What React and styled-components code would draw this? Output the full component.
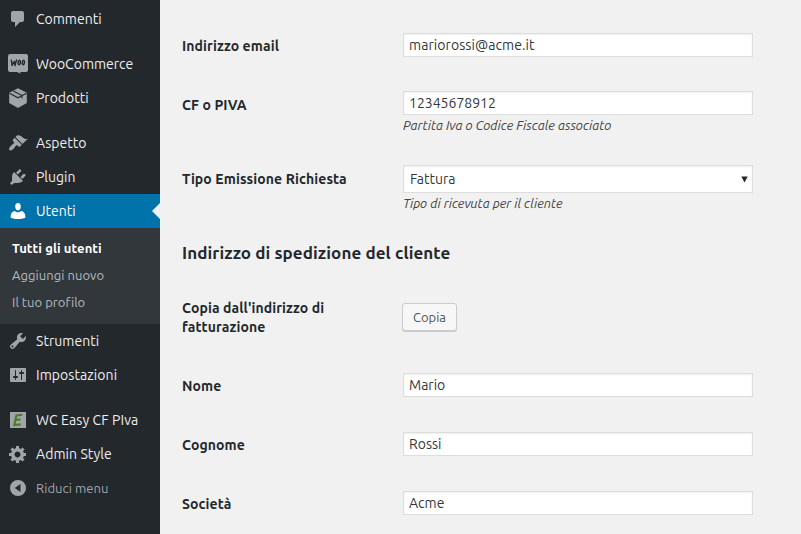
import React from 'react';
import styled, { createGlobalStyle, css } from 'styled-components';

const GlobalStyle = createGlobalStyle`
  *, *::before, *::after { box-sizing: border-box; }
  body {
    margin: 0;
    background: #f1f1f1;
    font-family: "Ubuntu", "Noto Sans", sans-serif;
    font-size: 13px;
    color: #444;
  }
`;

const Page = styled.div`
  display: flex;
  width: 801px;
  height: 534px;
  overflow: hidden;
`;

const Sidebar = styled.nav`
  flex: 0 0 160px;
  padding-top: 2px;
  background: #23282d;
`;

const MenuGroup = styled.div`
  & + & { margin-top: 11px; }
`;

const MenuItem = styled.a`
  position: relative;
  display: flex;
  align-items: center;
  gap: 8px;
  height: 34px;
  padding-left: 8px;
  color: #eee;
  font-size: 14px;
  line-height: 18px;
  white-space: nowrap;
  letter-spacing: ${(p) => p.$track || 0}px;

  svg { flex: none; fill: #a0a5aa; }

  ${(p) => p.$current && css`
    background: #0073aa;
    color: #fff;
    svg { fill: #fff; }
    &::after {
      content: "";
      position: absolute;
      right: 0;
      top: 9px;
      border: 8px solid transparent;
      border-left-width: 0;
      border-right-color: #f1f1f1;
    }
  `}

  ${(p) => p.$muted && css`
    color: #a0a5aa;
    font-size: 13px;
  `}
`;

const Submenu = styled.div`
  height: 96px;
  padding: 7px 0 8px 12px;
  background: #32373c;
`;

const SubmenuLink = styled.a`
  display: block;
  height: 27px;
  font-size: 13px;
  line-height: 27px;
  white-space: nowrap;
  color: ${(p) => (p.$current ? '#fff' : '#b4b9be')};
  font-weight: ${(p) => (p.$current ? 700 : 400)};
  letter-spacing: ${(p) => (p.$current ? 0.1 : 0.05)}px;
`;

const Content = styled.main`
  flex: 1;
  padding: 16px 48px 0 22px;
`;

const FieldRow = styled.div`
  display: grid;
  grid-template-columns: 221px 350px;
  height: ${(p) => p.$height}px;
  padding-top: 17px;
`;

const Label = styled.label`
  padding-top: ${(p) => p.$drop || 4}px;
  color: #23282d;
  font-size: 14px;
  font-weight: 700;
  line-height: 19px;
  letter-spacing: 0.1px;
`;

const LabelLine = styled.span`
  display: block;
`;

const control = css`
  display: block;
  width: 350px;
  margin: 0;
  border: 1px solid #ddd;
  border-radius: 0;
  outline: 0;
  background: #fff;
  box-shadow: inset 0 1px 2px rgba(0, 0, 0, 0.07);
  color: #32373c;
  font-family: inherit;
  font-size: 14px;
  letter-spacing: ${(p) => p.$track || 0}px;
`;

const TextInput = styled.input`
  ${control}
  height: 24px;
  padding: 0 5px 1px;
`;

const SelectWrap = styled.div`
  position: relative;
  height: 28px;

  svg {
    position: absolute;
    right: 5px;
    top: 11px;
    fill: #23282d;
  }
`;

const Select = styled.select`
  ${control}
  appearance: none;
  height: 28px;
  padding: 0 6px;
`;

const Hint = styled.div`
  font-size: 13px;
  font-style: italic;
  line-height: 20px;
  color: #444;
  white-space: nowrap;
`;

const SectionTitle = styled.h2`
  height: 57px;
  margin: 0;
  padding-top: 19px;
  color: #23282d;
  font-size: 17px;
  font-weight: 700;
  line-height: 24px;
  letter-spacing: 0.09px;
`;

const Button = styled.button`
  width: 55px;
  height: 28px;
  margin: 7px 0 0 -1px;
  padding: 0;
  border: 1px solid #ccc;
  border-radius: 3px;
  background: #f7f7f7;
  box-shadow: 0 1px 0 #ccc;
  color: #555;
  font-family: inherit;
  font-size: 13px;
  line-height: 26px;
`;

const PATHS = {
  comments: 'M5 2h9c1.1 0 2 .9 2 2v7c0 1.1-.9 2-2 2h-2l-5 5v-5H5c-1.1 0-2-.9-2-2V4c0-1.1.9-2 2-2z',
  users: 'M10 9.4c-2.100 0-2.800-2.100-2.800-3.900C7.200 3.400 8.200 2 10 2s2.800 1.400 2.800 3.500c0 1.800-.7 3.900-2.800 3.900zM6.900 9.900c.8.900 1.900 1.400 3.100 1.400s2.300-.5 3.100-1.400c2.600.3 4.200 2.500 4.200 4.900v2c-2.100.9-4.600 1.300-7.300 1.300s-5.200-.4-7.300-1.300v-2c0-2.400 1.600-4.600 4.200-4.900z',
  appearance: 'M14.48 11.06L7.41 3.99l1.5-1.5c.5-.56 2.3-.47 3.51.32 1.21.8 1.43 1.28 2.91 2.1 1.18.64 2.45 1.26 4.45.85zm-.71.71L6.7 4.7 4.93 6.47c-.39.39-.39 1.02 0 1.41l1.06 1.06c.39.39.39 1.03 0 1.42-.6.6-1.43 1.11-2.21 1.69-.35.26-.7.53-1.01.84C1.43 14.23.4 16.08 1.4 17.07c.99 1 2.84-.03 4.18-1.36.31-.31.58-.66.85-1.02.57-.78 1.08-1.61 1.69-2.21.39-.39 1.02-.39 1.41 0l1.06 1.06c.39.39 1.02.39 1.41 0z',
  plugins: 'M13.11 4.36L9.87 7.6 8 5.73l3.24-3.24c.35-.34 1.05-.2 1.56.32.52.51.66 1.21.31 1.55zm-8 1.77l.91-1.12 9.01 9.01-1.19.84c-.71.71-2.63 1.16-3.82 1.16H6.14L4.9 17.26c-.59.59-1.54.59-2.12 0-.59-.58-.59-1.53 0-2.12l1.24-1.24v-3.88c0-1.13.4-3.19 1.09-3.89zm7.26 3.97l3.24-3.24c.34-.35 1.04-.21 1.55.31.52.51.66 1.21.31 1.55l-3.24 3.25z',
  tools: 'M16.68 9.77c-1.34 1.34-3.3 1.67-4.95.99l-5.41 6.52c-.99.99-2.59.99-3.58 0s-.99-2.59 0-3.57l6.52-5.42c-.68-1.65-.35-3.61.99-4.95 1.28-1.28 3.12-1.62 4.72-1.06l-2.89 2.89 2.82 2.82 2.86-2.87c.53 1.58.18 3.39-1.08 4.65zM3.81 16.21c.4.39 1.04.39 1.43 0 .4-.4.4-1.04 0-1.43-.39-.4-1.03-.4-1.43 0-.39.39-.39 1.03 0 1.43z',
  settings: 'M18 16V4c0-.55-.45-1-1-1H3c-.55 0-1 .45-1 1v12c0 .55.45 1 1 1h14c.55 0 1-.45 1-1zM8 11h1c.55 0 1 .45 1 1s-.45 1-1 1H8v1.5c0 .28-.22.5-.5.5s-.5-.22-.5-.5V13H6c-.55 0-1-.45-1-1s.45-1 1-1h1V5.5c0-.28.22-.5.5-.5s.5.22.5.5V11zm5-2h-1c-.55 0-1-.45-1-1s.45-1 1-1h1V5.5c0-.28.22-.5.5-.5s.5.22.5.5V7h1c.55 0 1 .45 1 1s-.45 1-1 1h-1v5.5c0 .28-.22.5-.5.5s-.5-.22-.5-.5V9z',
  generic: 'M18 12h-2.18c-.17.7-.44 1.35-.81 1.93l1.54 1.54-2.1 2.1-1.54-1.54c-.58.36-1.23.63-1.91.79V19H8v-2.18c-.68-.16-1.33-.43-1.91-.79l-1.54 1.54-2.12-2.12 1.54-1.54c-.36-.58-.63-1.23-.79-1.91H1V9.03h2.17c.16-.7.44-1.35.8-1.94L2.43 5.55l2.1-2.1 1.54 1.54c.58-.37 1.24-.64 1.93-.81V2h3v2.18c.68.16 1.33.43 1.91.79l1.54-1.54 2.12 2.12-1.54 1.54c.36.59.64 1.24.8 1.94H18V12zm-8.5 1.5c1.66 0 3-1.34 3-3s-1.34-3-3-3-3 1.34-3 3 1.34 3 3 3z',
  collapse: 'M10 2a8 8 0 1 0 0 16a8 8 0 1 0 0-16zM12.500 6v8L6.800 10z',
};

const Icon = ({ name }) => (
  <svg width="20" height="20" viewBox="0 0 20 20" aria-hidden="true">
    <path fillRule="evenodd" d={PATHS[name]} />
  </svg>
);

const WooIcon = () => (
  <svg width="20" height="20" viewBox="0 0 20 20" aria-hidden="true">
    <path d="M2 0h16a2 2 0 0 1 2 2v14a2 2 0 0 1-2 2h-5.700l.2 1.800-3.400-1.800H2a2 2 0 0 1-2-2V2a2 2 0 0 1 2-2z" />
    <g fill="none" stroke="#23282d" strokeWidth="1.450" strokeLinecap="round" strokeLinejoin="round">
      <path d="M3.400 6.300l.7 5.200 2.100-4 1 4q.3-3.400 1.400-5.400" />
      <ellipse cx="11.200" cy="8.500" rx="1.100" ry="2.200" transform="rotate(12 11.200 8.500)" />
      <ellipse cx="15.300" cy="8.500" rx="1.100" ry="2.200" transform="rotate(12 15.300 8.500)" />
    </g>
  </svg>
);

const BoxIcon = () => (
  <svg width="20" height="20" viewBox="0 0 20 20" aria-hidden="true">
    <path d="M10 .2L18.800 4.800v10.300L10 20 1.200 15.100V4.800z" />
    <path d="M1.500 5.200L10 9.800l8.500-4.600M5.300 2.900l8.700 4.700v3" fill="none" stroke="#23282d" strokeWidth="1.100" />
  </svg>
);

const EasyIcon = () => (
  <svg width="20" height="20" viewBox="0 0 20 20" aria-hidden="true">
    <path d="M2 2h16v16H2z" />
    <path d="M14.300 4.800L8.300 5.400 6.300 15l6.400-.6M7.300 9.900l5.200-.4" fill="none" stroke="#4f7a28" strokeWidth="2.100" />
  </svg>
);

const shippingFields = [
  { label: 'Nome', value: 'Mario' },
  { label: 'Cognome', value: 'Rossi' },
  { label: 'Società', value: 'Acme' },
];

export default function App() {
  return (
    <>
      <GlobalStyle />
      <Page>
        <Sidebar>
          <MenuGroup>
            <MenuItem><Icon name="comments" />Commenti</MenuItem>
          </MenuGroup>
          <MenuGroup>
            <MenuItem><WooIcon />WooCommerce</MenuItem>
            <MenuItem><BoxIcon />Prodotti</MenuItem>
          </MenuGroup>
          <MenuGroup>
            <MenuItem><Icon name="appearance" />Aspetto</MenuItem>
            <MenuItem><Icon name="plugins" />Plugin</MenuItem>
            <MenuItem $current><Icon name="users" />Utenti</MenuItem>
            <Submenu>
              <SubmenuLink $current>Tutti gli utenti</SubmenuLink>
              <SubmenuLink>Aggiungi nuovo</SubmenuLink>
              <SubmenuLink>Il tuo profilo</SubmenuLink>
            </Submenu>
            <MenuItem $track={0.05}><Icon name="tools" />Strumenti</MenuItem>
            <MenuItem $track={0.08}><Icon name="settings" />Impostazioni</MenuItem>
          </MenuGroup>
          <MenuGroup>
            <MenuItem $track={0.1}><EasyIcon />WC Easy CF PIva</MenuItem>
            <MenuItem $track={0.08}><Icon name="generic" />Admin Style</MenuItem>
            <MenuItem $muted $track={0.08}><Icon name="collapse" />Riduci menu</MenuItem>
          </MenuGroup>
        </Sidebar>
        <Content>
          <FieldRow $height={58}>
            <Label>Indirizzo email</Label>
            <TextInput defaultValue="mariorossi@acme.it" $track={0.07} />
          </FieldRow>
          <FieldRow $height={74}>
            <Label $drop={5}>CF o PIVA</Label>
            <div>
              <TextInput defaultValue="12345678912" />
              <Hint>Partita Iva o Codice Fiscale associato</Hint>
            </div>
          </FieldRow>
          <FieldRow $height={74}>
            <Label $drop={5}>Tipo Emissione Richiesta</Label>
            <div>
              <SelectWrap>
                <Select defaultValue="Fattura"><option>Fattura</option></Select>
                <svg width="7" height="7" viewBox="0 0 7 7" aria-hidden="true"><path d="M.3.500h6.400L3.500 6.500z" /></svg>
              </SelectWrap>
              <Hint>Tipo di ricevuta per il cliente</Hint>
            </div>
          </FieldRow>
          <SectionTitle>Indirizzo di spedizione del cliente</SectionTitle>
          <FieldRow $height={77}>
            <Label $drop={3}>
              <LabelLine>Copia dall'indirizzo di</LabelLine>
              <LabelLine>fatturazione</LabelLine>
            </Label>
            <div>
              <Button>Copia</Button>
            </div>
          </FieldRow>
          {shippingFields.map((f) => (
            <FieldRow key={f.label} $height={59}>
              <Label>{f.label}</Label>
              <TextInput defaultValue={f.value} />
            </FieldRow>
          ))}
        </Content>
      </Page>
    </>
  );
}
